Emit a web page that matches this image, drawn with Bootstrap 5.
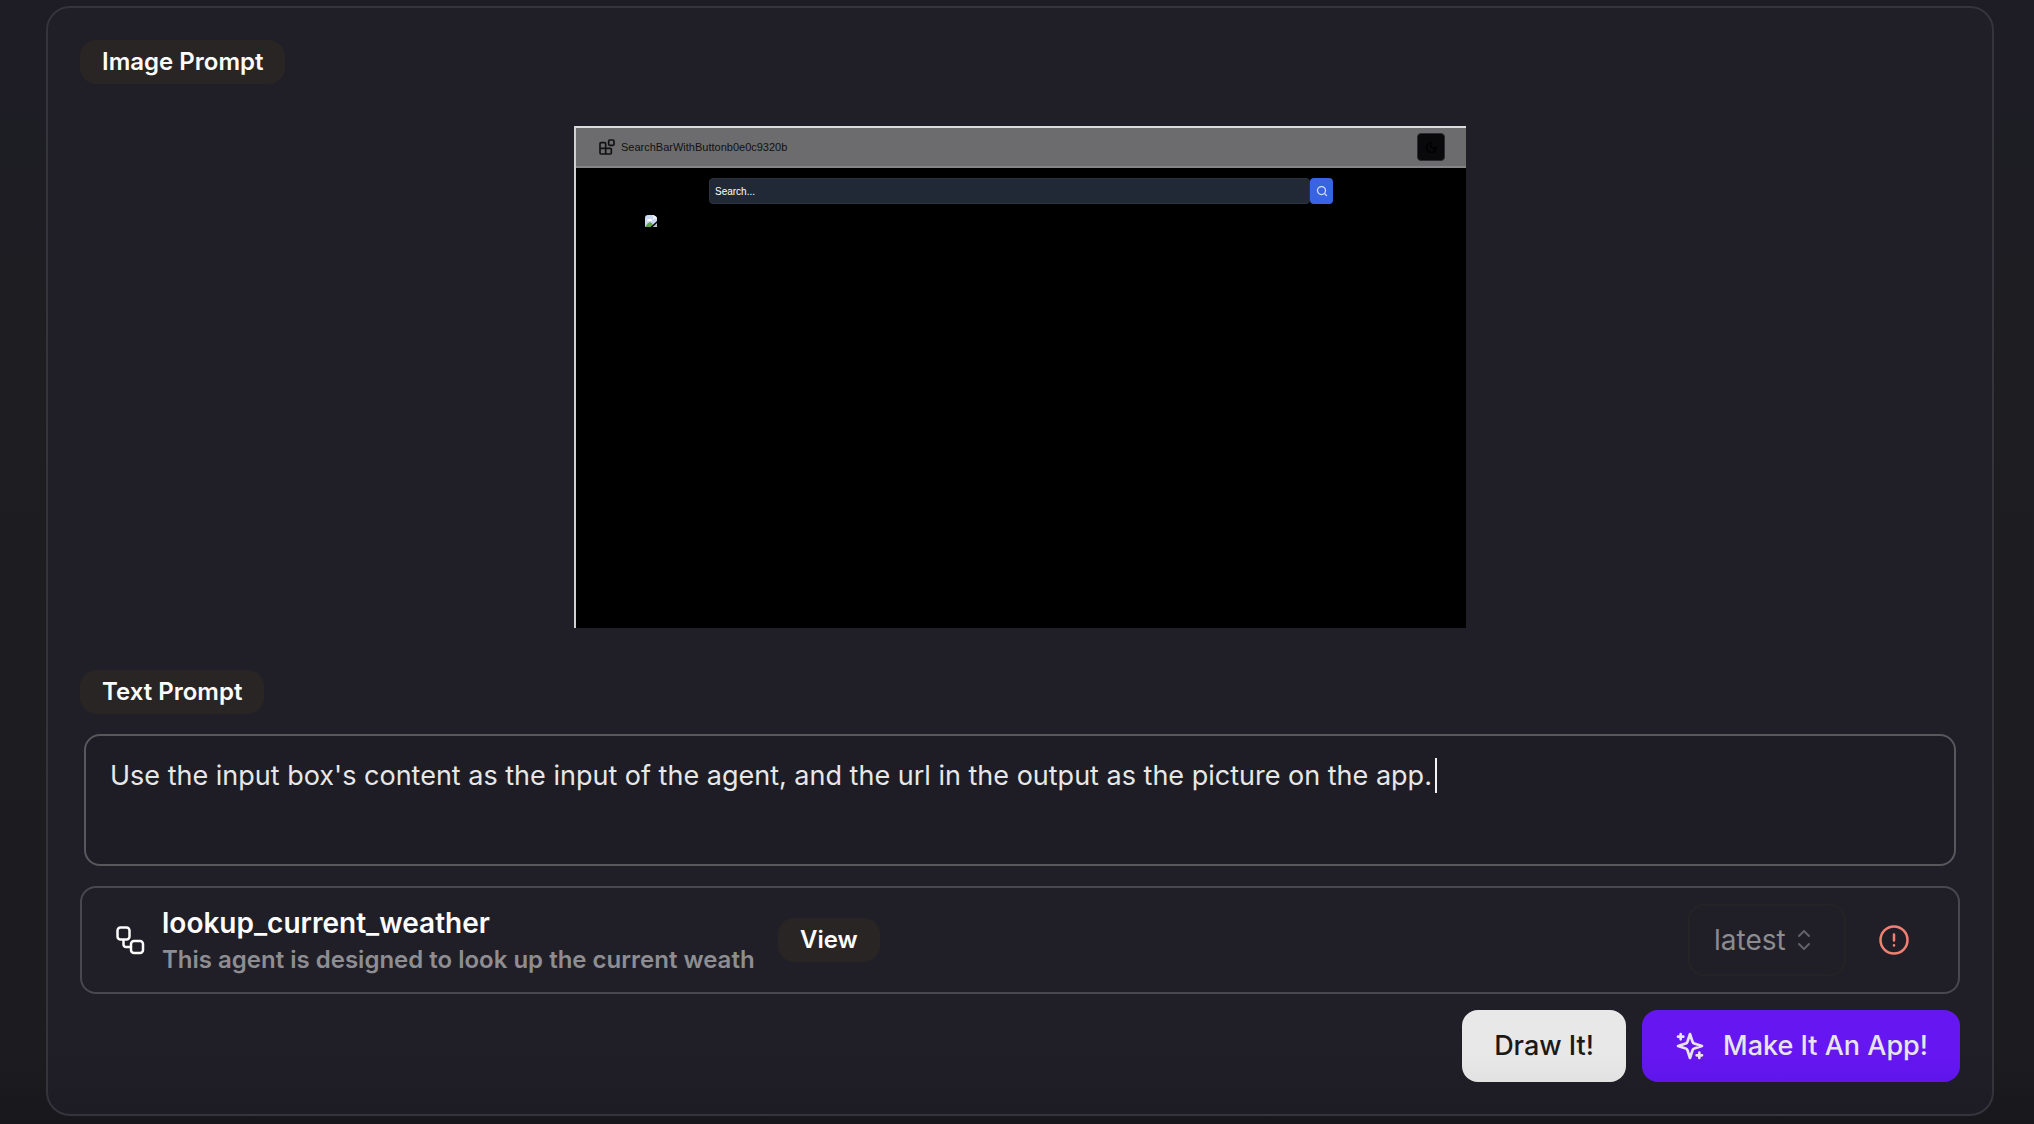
<!DOCTYPE html>
<html lang="en">
<head>
<meta charset="utf-8">
<meta name="viewport" content="width=device-width, initial-scale=1">
<title>Prompt builder</title>
<link href="https://cdn.jsdelivr.net/npm/bootstrap@5.3.0/dist/css/bootstrap.min.css" rel="stylesheet">
<style>
  body { background: linear-gradient(#1e1d26 0, #1d1d22 300px, #1c1c20 1060px, #18171b 1124px); font-family: Inter, "Open Sans", sans-serif; color: #fcfcfc; }
  .page-wrap { padding: 6px 40px 8px 46px; }
  .builder { border: 2px solid #35343d; border-radius: 24px; padding: 32px; background: linear-gradient(#201f28 0, #201f28 94%, #1d1c25 100%); }
  .pill { display: inline-flex; align-items: center; height: 44px; padding: 0 22px; border: 0; border-radius: 16px; background: #292524; color: #fcfcfc; font-size: 24px; font-weight: 600; line-height: 32px; }
  .shot { width: 892px; max-width: 100%; aspect-ratio: 892 / 502; margin: 42px auto; background: #000; border-top: 2px solid #dcdcdc; border-left: 2px solid #d0d0d0; font-family: "Liberation Sans", sans-serif; line-height: 16px; }
  .shot-bar { height: 40px; padding: 0 21px 0 23px; background: #6c6c6e; border-bottom: 2px solid #858587; color: #111; }
  .shot-title { margin-left: 6px; font-size: 11px; }
  .moon-btn { width: 28px; height: 28px; padding: 0; border: 1px solid #2c2c30; border-radius: 4px; background: #09090b; display: flex; align-items: center; justify-content: center; }
  .shot-search { width: 624px; margin: 10px auto 0; }
  .shot-search input { flex: 1; min-width: 0; height: 26px; padding: 0 5px; border: 1px solid #2a3441; border-radius: 4px; background: #212936; color: #fff; font-size: 10px; }
  .shot-search input::placeholder { color: #fff; opacity: 1; }
  .shot-search button { width: 23px; height: 26px; padding: 0; border: 0; border-radius: 4px; background: #3863e3; display: flex; align-items: center; justify-content: center; }
  .broken { display: block; margin: 11px 0 0 69px; }
  .prompt-wrap { margin: 20px 4px; position: relative; }
  .prompt-box { display: block; width: 100%; height: 132px; resize: none; border: 2px solid #58585c; border-radius: 16px; background: #1e1d25; color: #e7e7e7; padding: 20px 24px; font-size: 27px; line-height: 40px; outline: 0; }
  .caret { position: absolute; left: 1351px; top: 24px; width: 2px; height: 35px; background: #f2f2f2; }
  .agent { min-height: 108px; border: 2px solid #48484f; border-radius: 16px; padding: 0 48px 0 34px; }
  .agent-text { width: 600px; margin: 0 16px 0 17px; }
  .agent-name { font-size: 28px; line-height: 40px; font-weight: 600; }
  .agent-desc { font-size: 24px; line-height: 34px; font-weight: 600; color: #8e8d92; }
  .version { position: relative; }
  .version select { width: 158px; height: 72px; appearance: none; border: 2px solid #252326; border-radius: 16px; background: transparent; color: #8c8b8f; font-size: 28px; padding: 0 24px; }
  .version svg { position: absolute; right: 35px; top: 25px; pointer-events: none; }
  .alert-btn { margin-left: 32px; padding: 0; border: 0; background: none; line-height: 0; }
  .act { height: 72px; border: 0; border-radius: 16px; padding: 0 32px; font-size: 27px; font-weight: 500; line-height: 40px; display: flex; align-items: center; white-space: nowrap; }
  .act-draw { background: linear-gradient(#e8e8e8 60%, #e2e2e2); color: #1c1917; }
  .act-make { background: linear-gradient(#6616f1 60%, #6015ec); color: #e7e5e9; }
  .act-make svg { margin-right: 17px; }
</style>
<script src="https://cdn.jsdelivr.net/npm/bootstrap@5.3.0/dist/js/bootstrap.bundle.min.js"></script>
</head>
<body>
<main class="page-wrap">
  <section class="builder">
    <div class="d-flex"><span class="pill">Image Prompt</span></div>
    <div class="shot">
      <div class="shot-bar d-flex align-items-center">
        <svg width="16" height="16" viewBox="0 0 24 24" fill="none" stroke="#111" stroke-width="2.500" stroke-linejoin="round"><rect x="14.5" y="1.5" width="8" height="8" rx="1.5"/><path d="M10 22V7a1.500 1.500 0 0 0-1.500-1.500H3A1.500 1.500 0 0 0 1.500 7v14A1.500 1.500 0 0 0 3 22.500h14a1.500 1.500 0 0 0 1.500-1.500v-5.500a1.500 1.500 0 0 0-1.500-1.500H2"/></svg>
        <span class="shot-title">SearchBarWithButtonb0e0c9320b</span>
        <button class="moon-btn ms-auto" type="button" aria-label="Toggle theme"><svg width="13" height="13" viewBox="0 0 24 24" fill="none" stroke="#000" stroke-width="2.500" stroke-linecap="round" stroke-linejoin="round"><path d="M12 3a6 6 0 0 0 9 9 9 9 0 1 1-9-9Z"/></svg></button>
      </div>
      <div class="shot-search d-flex">
        <input type="text" placeholder="Search..." aria-label="Search">
        <button type="button" aria-label="Search"><svg width="12" height="12" viewBox="0 0 24 24" fill="none" stroke="#d5defa" stroke-width="2.500" stroke-linecap="round"><circle cx="11" cy="11" r="8"/><path d="m21 21-4.300-4.300"/></svg></button>
      </div>
      <svg class="broken" width="12" height="12" viewBox="0 0 12 12"><path d="M0 12V3Q0 0 3 0H8Q12 1 12 4V12Z" fill="#cbd9f2"/><path d="M8 0v4h4Q12 1 8 0z" fill="#eceff5"/><path d="M2 6q0-2 2-2 2-1 3 1v1z" fill="#fff"/><path d="M0 12Q2 8 5 7L8 9 6 12Z" fill="#63a548"/><path d="M12 6v2L8 12H5.500Z" fill="#000"/><path d="M8 12 12 9v3z" fill="#b9c4c0"/></svg>
    </div>
    <div class="d-flex"><label class="pill" for="prompt">Text Prompt</label></div>
    <div class="prompt-wrap">
      <textarea class="prompt-box" id="prompt">Use the input box's content as the input of the agent, and the url in the output as the picture on the app.</textarea>
      <span class="caret"></span>
    </div>
    <div class="agent d-flex align-items-center">
      <svg width="29" height="29" viewBox="0 0 29 29" fill="none" stroke="#fcfcfc" stroke-width="2.500"><rect x="1.500" y="1.500" width="12" height="12" rx="3"/><rect x="15" y="15" width="12" height="12" rx="3"/><path d="M7.500 13.500v5a2.500 2.500 0 0 0 2.500 2.500h5"/></svg>
      <div class="agent-text">
        <div class="agent-name">lookup_current_weather</div>
        <div class="agent-desc text-nowrap overflow-hidden">This agent is designed to look up the current weath</div>
      </div>
      <button class="pill" type="button">View</button>
      <div class="version ms-auto">
        <select aria-label="Version"><option>latest</option></select>
        <svg width="14" height="22" viewBox="0 0 14 22" fill="none" stroke="#626166" stroke-width="2" stroke-linecap="round" stroke-linejoin="round"><path d="M2 7l5-5 5 5M2 15l5 5 5-5"/></svg>
      </div>
      <button class="alert-btn" type="button" aria-label="Show error"><svg width="32" height="32" viewBox="0 0 32 32" fill="none" stroke="#f08072" stroke-width="2.500" stroke-linecap="round"><circle cx="16" cy="16" r="13.500"/><path d="M16 10.500v6M16 21.300v.1"/></svg></button>
    </div>
    <div class="d-flex justify-content-end gap-3 mt-3">
      <button class="act act-draw" type="button">Draw It!</button>
      <button class="act act-make" type="button"><svg width="32" height="32" viewBox="0 0 24 24" fill="none" stroke="#e7e5e9" stroke-width="2" stroke-linecap="round" stroke-linejoin="round"><path d="m12 3-1.900 5.800a2 2 0 0 1-1.300 1.300L3 12l5.800 1.900a2 2 0 0 1 1.300 1.300L12 21l1.900-5.800a2 2 0 0 1 1.300-1.300L21 12l-5.800-1.900a2 2 0 0 1-1.300-1.300Z"/><path d="M5 3v4M19 17v4M3 5h4M17 19h4"/></svg>Make It An App!</button>
    </div>
  </section>
</main>
</body>
</html>
